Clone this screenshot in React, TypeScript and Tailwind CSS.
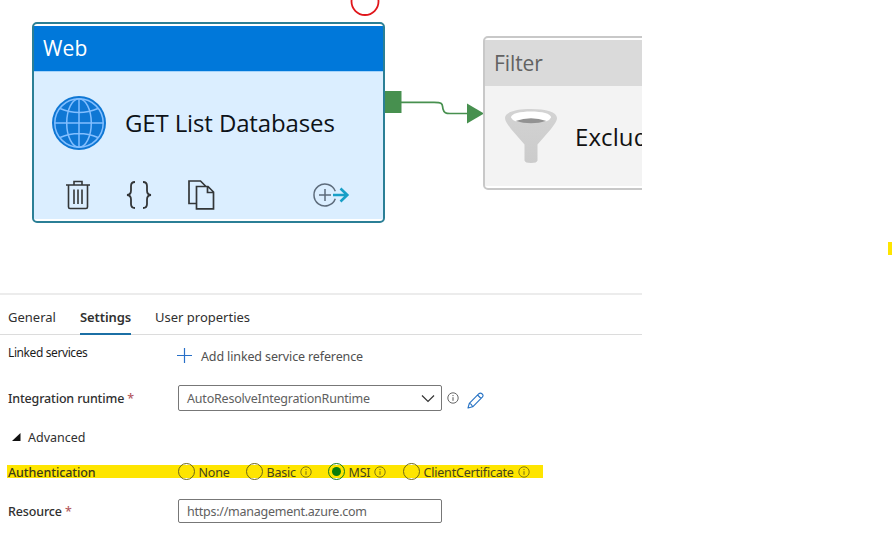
import React from "react";

function InfoIcon({ color = "#555" }: { color?: string }) {
  return (
    <svg width="12" height="12" viewBox="0 0 12 12" fill="none" stroke={color} className="shrink-0">
      <circle cx="6" cy="6" r="5.2" strokeWidth="0.9" />
      <path d="M6 5.2V8.8M6 3V4.1" strokeWidth="1" />
    </svg>
  );
}

function Globe() {
  return (
    <svg width="54" height="54" viewBox="0 0 54 54" fill="none" className="shrink-0">
      <circle cx="27" cy="27" r="27" fill="#0f77d4" />
      <g stroke="#83bfff" strokeWidth="1.5">
        <circle cx="27" cy="27" r="24.2" />
        <ellipse cx="27" cy="27" rx="12.3" ry="24.2" />
        <path d="M2.8 27H51.2M27 3V51M8 12.5Q27 20.5 46 12.5M8 41.5Q27 33.5 46 41.5" />
      </g>
    </svg>
  );
}

function TrashIcon() {
  return (
    <svg width="24" height="30" viewBox="0 0 24 30" fill="none" stroke="#333638" strokeWidth="1.6">
      <path d="M0 5H24M8 5V1.5H16V5M2.5 5V27Q2.5 28.5 4 28.5H20Q21.5 28.5 21.5 27V5M8 9.5V24M12 9.5V24M16 9.5V24" />
    </svg>
  );
}

function BracesIcon() {
  return (
    <svg width="26" height="28" viewBox="0 0 26 28" fill="none" stroke="#333638" strokeWidth="1.8">
      <path d="M9 1C5.8 1 5 2.3 5 5V9.5C5 12.3 4 13.8 1 14C4 14.2 5 15.7 5 18.5V23C5 25.7 5.8 27 9 27M17 1C20.2 1 21 2.3 21 5V9.5C21 12.3 22 13.8 25 14C22 14.2 21 15.7 21 18.5V23C21 25.7 20.2 27 17 27" />
    </svg>
  );
}

function CopyIcon() {
  return (
    <svg width="27" height="30" viewBox="0 0 27 30" fill="none" stroke="#333638" strokeWidth="1.7">
      <path d="M8.5 23.5H1V1H12.5L18 6.5M8.5 6.5H20L25.5 12V28.8H8.5ZM19.5 6.5V12.5H25.5" />
    </svg>
  );
}

function AddOutputIcon() {
  return (
    <svg width="37" height="24" viewBox="0 0 37 24" fill="none">
      <path d="M22.3 8.2A11 11 0 1 0 22.3 15.8M12 6V18M6 12H18" stroke="#5d6b7b" strokeWidth="1.5" />
      <path d="M20 12H34M27.5 5.5L34.3 12L27.5 18.5" stroke="#189fc7" strokeWidth="2.6" />
    </svg>
  );
}

function Funnel() {
  return (
    <svg width="54" height="56" viewBox="0 0 54 56" className="shrink-0">
      <defs>
        <linearGradient id="funnel" x2="0" y2="1">
          <stop stopColor="#d3d3d3" />
          <stop offset="1" stopColor="#cbcbcb" />
        </linearGradient>
      </defs>
      <path d="M1 10C1 4 12 1 27 1S53 4 53 10C53 13 50 17 47 21L33.5 36.5V52.5Q33 55 27 55T20.5 52.5V36.5L7 21C4 17 1 13 1 10Z" fill="url(#funnel)" />
      <path d="M7 9.5C7 5.5 16 3.5 27 3.5S47 5.5 47 9.5Q46 12 42 13.5H12Q8 12 7 9.5Z" fill="#fff" />
      <path d="M11.5 13Q27 7.5 42.5 13Q27 17.5 11.5 13Z" fill="#929292" />
    </svg>
  );
}

function Radio({ label, checked, info, className }: { label: string; checked?: boolean; info?: boolean; className: string }) {
  return (
    <div className={`flex items-center ${className}`}>
      <span className={`flex h-[17px] w-[17px] shrink-0 items-center justify-center rounded-full border ${checked ? "border-[#14791c]" : "border-[#6b6518]"}`}>
        {checked && <span className="h-[9px] w-[9px] rounded-full bg-[#087d08]" />}
      </span>
      <span className="ml-[3.5px] whitespace-nowrap pt-[3px] tracking-[-0.2px] text-[#45431c]">{label}</span>
      {info && <span className="ml-[4px]"><InfoIcon color="#756d12" /></span>}
    </div>
  );
}

function Canvas() {
  return (
    <section className="relative h-[293px] w-[642px] overflow-hidden">
      <svg className="absolute left-[350px] top-0" width="30" height="17" viewBox="0 0 30 17">
        <circle cx="15" cy="1.5" r="13.5" fill="none" stroke="#e0161b" strokeWidth="1.8" />
      </svg>
      <div className="absolute left-[32px] top-[22px] flex h-[201px] w-[353px] flex-col rounded-[5px] border-2 border-[#2b7f96] bg-white py-[2px]">
        <div className="flex h-[45px] shrink-0 items-center bg-[#0078da] pl-[9px] pt-px text-[21px] text-white">
          <span className="tracking-[0.2px]">Web</span>
        </div>
        <div className="flex h-[148px] flex-col border-t border-[#a5d3fa] bg-[#dbeeff]">
          <div className="flex h-[102px] items-center pl-[18px]">
            <Globe />
            <span className="ml-[19px] whitespace-nowrap text-[24px] tracking-[-0.13px] text-[#0d1218]">GET List Databases</span>
          </div>
          <div className="flex h-[42px] items-center pl-[32px]">
            <TrashIcon />
            <span className="mb-px ml-[36px]"><BracesIcon /></span>
            <span className="ml-[36px]"><CopyIcon /></span>
            <span className="ml-[98px]"><AddOutputIcon /></span>
          </div>
        </div>
      </div>
      <svg className="absolute left-[385px] top-[88px]" width="100" height="38" viewBox="0 0 100 38">
        <path d="M0 3H16.5V25H0Z" fill="#47904f" />
        <path d="M16 14.3H49C59 14.3 57 17 58 21C59 25 61 25.5 65 25.5H83" fill="none" stroke="#47904f" strokeWidth="1.7" />
        <path d="M82 15.5L99 25.5L82 35.5Z" fill="#47904f" />
      </svg>
      <div className="absolute left-[483px] top-[36px] flex h-[154px] w-[353px] flex-col rounded-[5px] border-2 border-[#c8c8c8] bg-white py-[2px]">
        <div className="flex h-[46px] shrink-0 items-center bg-[#dadada] pl-[9px] pt-px text-[21px] text-[#626262]">
          <span className="tracking-[-0.1px]">Filter</span>
        </div>
        <div className="flex h-[100px] items-center bg-[#f3f3f3] pl-[19px]">
          <Funnel />
          <span className="ml-[17px] whitespace-nowrap pt-[2px] text-[24px] tracking-[0.1px] text-[#111]">Exclud</span>
        </div>
      </div>
    </section>
  );
}

function Settings() {
  return (
    <section className="w-[642px] border-t-2 border-[#ececec] font-['Noto_Sans',sans-serif] text-[12.5px] text-[#303030]">
      <nav className="flex h-[40px] border-b border-[#dcdcdc] pl-2 text-[13px] leading-[44px]">
        <span className="w-[72px]">General</span>
        <span className="-mb-px h-[40px] w-[51px] whitespace-nowrap border-b-2 border-[#1b6fa5] font-semibold tracking-[-0.1px]">Settings</span>
        <span className="ml-[24px]">User properties</span>
      </nav>
      <div className="flex h-[42px] pl-2">
        <span className="mt-[9px] h-[18px] w-[169px] text-[12px] leading-[18px] tracking-[-0.4px] text-[#1c1c1c]">Linked services</span>
        <div className="mt-[12px] flex h-[18px] items-center">
          <svg width="16" height="16" viewBox="0 0 16 16" stroke="#2870c8" strokeWidth="1.2"><path d="M0 7.5H15M7.5 0V15" /></svg>
          <span className="ml-2 whitespace-nowrap pt-[2px] tracking-[-0.13px] text-[#505050]">Add linked service reference</span>
        </div>
      </div>
      <div className="flex h-[42px] items-center pl-2">
        <span className="w-[170px] whitespace-nowrap pt-[2px] font-medium tracking-[-0.16px]">Integration runtime <span className="text-[#b45a60]">*</span></span>
        <div className="flex h-[26px] w-[264px] items-center justify-between rounded-[2px] border border-[#777] pl-2 pr-[6px] text-[#606060]">
          <span className="pt-[3px] tracking-[-0.2px]">AutoResolveIntegrationRuntime</span>
          <svg width="14" height="9" viewBox="0 0 14 9" fill="none" stroke="#333" strokeWidth="1.2"><path d="M1 1.5L7 7.5L13 1.5" /></svg>
        </div>
        <span className="ml-[5px]"><InfoIcon /></span>
        <svg className="ml-[8px] mt-[5px]" width="17" height="17" viewBox="0 0 17 17" fill="none" stroke="#2672c4" strokeWidth="1.1" strokeLinejoin="round">
          <path d="M1 16L2.3 11.3L11.9 1.7Q13.5 0.5 15.2 2T15.3 5.2L5.7 14.8ZM2.3 11.3Q4.5 11.8 5.7 14.8M10.6 3L14 6.5" />
        </svg>
      </div>
      <div className="flex h-[36px] items-center pl-[12px]">
        <svg width="9" height="8" viewBox="0 0 9 8"><path d="M8.5 0V8H0Z" fill="#111" /></svg>
        <span className="ml-[7px] pt-[2px]">Advanced</span>
      </div>
      <div className="ml-[7px] mt-[10px] flex h-[13px] w-[536px] items-center bg-[#fee500] pl-px">
        <span className="w-[170px] pt-[3px] font-medium tracking-[-0.08px] text-[#3c3a18]">Authentication</span>
        <Radio label="None" className="w-[68px]" />
        <Radio label="Basic" info className="w-[82px]" />
        <Radio label="MSI" checked info className="w-[75px]" />
        <Radio label="ClientCertificate" info className="w-[130px]" />
      </div>
      <div className="mt-[21px] flex h-[24px] items-center pl-2">
        <span className="w-[170px] pt-[2px] font-medium tracking-[-0.15px]">Resource <span className="text-[#b45a60]">*</span></span>
        <div className="flex h-[24px] w-[264px] items-center rounded-[2px] border border-[#777] pl-2 pt-[2px] tracking-[-0.25px] text-[#606060]">https://management.azure.com</div>
      </div>
    </section>
  );
}

export default function App() {
  return (
    <main className="flex h-[535px] w-[893px] justify-between overflow-hidden bg-white font-['Open_Sans',sans-serif]">
      <div>
        <Canvas />
        <Settings />
      </div>
      <span className="mr-px mt-[242px] h-[13px] w-[4px] bg-[#fee500]" />
    </main>
  );
}
